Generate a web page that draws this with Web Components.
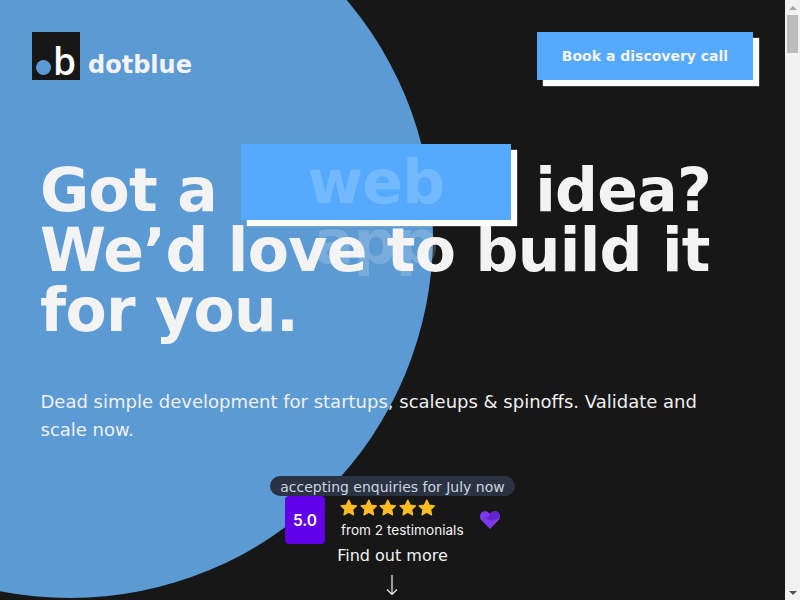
<!DOCTYPE html>
<html lang="en">
<head>
<meta charset="utf-8">
<title>dotblue</title>
<style>
  html, body {
    margin: 0;
    height: 600px;
    overflow: hidden;
    background: #171717;
    color: #f3f3f3;
    font-family: "DejaVu Sans", sans-serif;
  }
  body {
    display: flex;
  }
  db-hero {
    flex: 1;
    min-width: 0;
  }
</style>
</head>
<body>
<db-hero>
  <db-logo slot="logo">dotblue</db-logo>
  <db-button slot="cta">Book a discovery call</db-button>
  <span slot="before">Got a</span>
  <db-words slot="words" words="web,app"></db-words>
  <span slot="after">idea? We’d love to build it for you.</span>
  <span slot="lead">Dead simple development for startups, scaleups &amp; spinoffs. Validate and scale now.</span>
  <db-pill slot="pill">accepting enquiries for July now</db-pill>
  <db-rating slot="rating" score="5.0" label="from 2 testimonials"></db-rating>
  <db-more slot="more">Find out more</db-more>
</db-hero>
<db-scrollbar></db-scrollbar>

<script>
class Hero extends HTMLElement {
  constructor() {
    super();

    this.attachShadow({ mode: "open" });
    this.shadowRoot.innerHTML = `
      <style>
        :host {
          display: block;
          position: relative;
          height: 600px;
          overflow: hidden;
        }

        .circle {
          position: absolute;
          left: -293px;
          top: -128px;
          width: 726px;
          height: 726px;
          border-radius: 50%;
          background: #5b9ad2;
        }

        .content {
          position: relative;
          display: flex;
          flex-direction: column;
          height: 100%;
        }

        header {
          display: flex;
          justify-content: space-between;
          align-items: center;
          padding: 32px 32px 0;
        }

        h1 {
          margin: 64px 0 0;
          padding: 0 40px;
          font-size: 60px;
          font-weight: 700;
          line-height: 60px;
          letter-spacing: -0.7px;
        }

        p {
          margin: 48px 0 0;
          padding: 0 40px 0 40.5px;
          max-width: 680px;
          font-size: 18px;
          line-height: 28px;
          color: #f0f0f0;
        }

        .stack {
          display: flex;
          flex-direction: column;
          align-items: center;
          margin-top: 32px;
        }
      </style>

      <div class="circle"></div>
      <div class="content">
        <header>
          <slot name="logo"></slot>
          <slot name="cta"></slot>
        </header>
        <h1><slot name="before"></slot> <slot name="words"></slot> <slot name="after"></slot></h1>
        <p><slot name="lead"></slot></p>
        <div class="stack">
          <slot name="pill"></slot>
          <slot name="rating"></slot>
          <slot name="more"></slot>
        </div>
      </div>
    `;
  }
}

class Logo extends HTMLElement {
  constructor() {
    super();

    this.attachShadow({ mode: "open" });
    this.shadowRoot.innerHTML = `
      <style>
        :host {
          display: flex;
          align-items: flex-end;
          gap: 8px;
          font-size: 24px;
          font-weight: 700;
          line-height: 30px;
        }

        .mark {
          position: relative;
          display: flex;
          justify-content: flex-end;
          width: 48px;
          height: 48px;
          background: #171717;
        }

        .mark i {
          position: absolute;
          left: 4px;
          top: 28px;
          width: 15px;
          height: 15px;
          border-radius: 50%;
          background: #5b9ad2;
        }

        .mark b {
          font-family: "Open Sans", sans-serif;
          font-size: 37px;
          font-weight: 600;
          line-height: 57px;
          color: #fff;
          padding-right: 4px;
        }
      </style>

      <span class="mark"><i></i><b>b</b></span>
      <slot></slot>
    `;
  }
}

class Button extends HTMLElement {
  constructor() {
    super();

    this.attachShadow({ mode: "open" });
    this.shadowRoot.innerHTML = `
      <style>
        :host {
          display: block;
        }

        a {
          display: block;
          width: 216px;
          height: 48px;
          line-height: 48px;
          text-align: center;
          font-size: 14px;
          font-weight: 700;
          color: #f3f3f3;
          background: #55aaff;
          box-shadow: 6px 6px 1px #fff;
        }
      </style>

      <a><slot></slot></a>
    `;
  }
}

class Words extends HTMLElement {
  constructor() {
    super();

    this.attachShadow({ mode: "open" });
    const words = this.getAttribute("words").split(",");
    this.shadowRoot.innerHTML = `
      <style>
        :host {
          display: inline-block;
          position: relative;
          vertical-align: bottom;
          width: 270px;
          height: 76px;
          margin: 0 4px 0 3.7px;
          background: #55aaff;
          box-shadow: 6px 6px 1px #fff;
        }

        .list {
          position: absolute;
          left: 0;
          right: 0;
          top: 8px;
          text-align: center;
          color: rgba(255, 255, 255, 0.18);
        }

        span {
          display: block;
        }
      </style>

      <div class="list">
        ${words.map((word) => `<span>${word}</span>`).join("")}
      </div>
    `;
  }
}

class Pill extends HTMLElement {
  constructor() {
    super();

    this.attachShadow({ mode: "open" });
    this.shadowRoot.innerHTML = `
      <style>
        :host {
          display: block;
          height: 20px;
          padding: 0 10px;
          border-radius: 10px;
          background: #2b3342;
          color: #cbd5e1;
          font-size: 14px;
          line-height: 22px;
        }
      </style>

      <slot></slot>
    `;
  }
}

class Rating extends HTMLElement {
  constructor() {
    super();

    this.attachShadow({ mode: "open" });
    const star = `
      <svg viewBox="0 0 24 24" width="19.6" height="19.6">
        <path fill="#fbbc24" stroke="#fbbc24" stroke-width="1.5" stroke-linejoin="round"
          d="M12 2.5l2.9 6.1 6.6.9-4.8 4.6 1.2 6.6-5.9-3.2-5.9 3.2 1.2-6.6-4.8-4.6 6.6-.9z"/>
      </svg>`;
    this.shadowRoot.innerHTML = `
      <style>
        :host {
          display: flex;
          width: 215px;
          height: 48px;
          font-family: Inter, sans-serif;
        }

        .score {
          flex: none;
          display: flex;
          align-items: center;
          justify-content: center;
          width: 40px;
          height: 48px;
          border-radius: 4px;
          background: #6200ea;
          color: #fff;
          font-size: 15.5px;
          font-weight: 600;
        }

        .info {
          flex: 1;
          padding-left: 16px;
        }

        .stars {
          display: flex;
          height: 24px;
          padding-top: 2px;
          box-sizing: border-box;
          margin-left: -2px;
        }

        .stars svg {
          display: block;
        }

        .label {
          font-size: 13.6px;
          line-height: 20px;
          color: #f3f3f3;
        }

        .heart {
          flex: none;
          align-self: center;
          display: block;
        }
      </style>

      <div class="score">${this.getAttribute("score")}</div>
      <div class="info">
        <div class="stars">${star.repeat(5)}</div>
        <div class="label">${this.getAttribute("label")}</div>
      </div>
      <svg class="heart" viewBox="0 0 20 18" width="20" height="18">
        <path fill="#7c3aed" d="M10 18L1.7 9.6C-.6 7.2-.5 3.6 1.7 1.6 4 -.4 7.6 0 10 2.8 12.4 0 16 -.4 18.3 1.6c2.2 2 2.3 5.6 0 8z"/>
        <path fill="#6324cf" d="M10 2.8C12.4 0 16 -.4 18.3 1.6 19.6 2.8 20 4.4 19.9 6 16 10.5 8 10.5 5.5 6.5 7.5 7 9.5 5 10 2.8z"/>
      </svg>
    `;
  }
}

class More extends HTMLElement {
  constructor() {
    super();

    this.attachShadow({ mode: "open" });
    this.shadowRoot.innerHTML = `
      <style>
        :host {
          display: flex;
          flex-direction: column;
          align-items: center;
          font-size: 16px;
          line-height: 24px;
        }

        svg {
          display: block;
          margin-top: 6px;
        }
      </style>

      <slot></slot>
      <svg viewBox="0 0 14 22" width="14" height="22" fill="none" stroke="#f3f3f3" stroke-width="1.2">
        <path d="M7 1v19M2 15.5L7 20.5l5-5"/>
      </svg>
    `;
  }
}

class Scrollbar extends HTMLElement {
  constructor() {
    super();

    this.attachShadow({ mode: "open" });
    this.shadowRoot.innerHTML = `
      <style>
        :host {
          flex: none;
          display: flex;
          flex-direction: column;
          align-items: center;
          width: 15px;
          height: 600px;
          background: #f1f1f1;
        }

        .btn {
          height: 15px;
          display: flex;
          align-items: center;
          justify-content: center;
        }

        .thumb {
          width: 11px;
          height: 38px;
          background: #bdbdbd;
        }

        .track {
          flex: 1;
        }
      </style>

      <div class="btn">
        <svg viewBox="0 0 8 4" width="8" height="4"><path fill="#a3a3a3" d="M4 0l4 4H0z"/></svg>
      </div>
      <div class="thumb"></div>
      <div class="track"></div>
      <div class="btn">
        <svg viewBox="0 0 8 4" width="8" height="4"><path fill="#505050" d="M4 4l4-4H0z"/></svg>
      </div>
    `;
  }
}

customElements.define("db-hero", Hero);
customElements.define("db-logo", Logo);
customElements.define("db-button", Button);
customElements.define("db-words", Words);
customElements.define("db-pill", Pill);
customElements.define("db-rating", Rating);
customElements.define("db-more", More);
customElements.define("db-scrollbar", Scrollbar);
</script>
</body>
</html>
